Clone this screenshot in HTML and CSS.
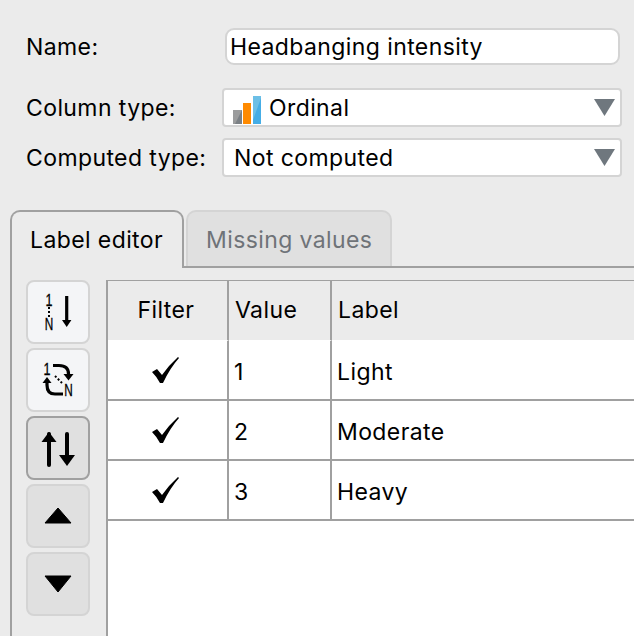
FILE: index.html
```html
<!DOCTYPE html>
<html lang="en">
<head>
    <meta charset="UTF-8">
    <meta name="viewport" content="width=device-width, initial-scale=1.0">
    <title>Column settings</title>
    <link rel="stylesheet" href="styles.css">
</head>
<body>
    <form class="settings">
        <div class="field field-name">
            <label for="name">Name:</label>
            <input type="text" id="name" value="Headbanging intensity">
        </div>
        <div class="field field-type">
            <label>Column type:</label>
            <div class="select">
                <svg class="ordinal-icon" width="28" height="28" viewBox="0 0 28 28">
                    <rect x="0" y="14" width="9" height="14" fill="#9b9c9d"/>
                    <path d="M9 14V28H2Z" fill="#7b8085"/>
                    <rect x="10" y="7" width="8" height="21" fill="#ff8a00"/>
                    <rect x="20" y="0" width="8" height="28" fill="#45ade6"/>
                    <path d="M20 0H28V2L20 24Z" fill="#6cbfe6"/>
                </svg>
                <span>Ordinal</span>
                <svg class="caret" width="21" height="17" viewBox="0 0 21 17"><path d="M0 0H21L10.500 17Z"/></svg>
            </div>
        </div>
        <div class="field field-computed">
            <label>Computed type:</label>
            <div class="select select-plain">
                <span>Not computed</span>
                <svg class="caret" width="21" height="17" viewBox="0 0 21 17"><path d="M0 0H21L10.500 17Z"/></svg>
            </div>
        </div>
    </form>

    <div class="tabs">
        <div class="tab tab-active">Label editor</div>
        <div class="tabs-rest">
            <div class="tab">Missing values</div>
        </div>
    </div>

    <div class="panel">
        <div class="tools">
            <button type="button" class="tool">
                <svg width="60" height="60" viewBox="0 0 60 60">
                    <text class="num" x="21" y="24" textLength="7" lengthAdjust="spacingAndGlyphs">1</text>
                    <path class="dots" d="M21 25V35"/>
                    <text class="num" x="21" y="48" textLength="8.500" lengthAdjust="spacingAndGlyphs">N</text>
                    <path class="line" d="M38.700 14V40"/>
                    <path d="M34 38H43.400L38.700 45Z"/>
                </svg>
            </button>
            <button type="button" class="tool">
                <svg width="60" height="60" viewBox="0 0 60 60">
                    <text class="num" x="19" y="25" textLength="7" lengthAdjust="spacingAndGlyphs">1</text>
                    <text class="num" x="40.500" y="46" textLength="8.500" lengthAdjust="spacingAndGlyphs">N</text>
                    <path class="dots" d="M27 26L34 33"/>
                    <path class="line" d="M25 15.500H31Q40.500 15.500 40.500 24"/>
                    <path d="M35.500 24H45.500L40.500 30.500Z"/>
                    <path class="line" d="M19 33V35Q19 44 27 44H35"/>
                    <path d="M14.500 33H23.500L19 27Z"/>
                </svg>
            </button>
            <button type="button" class="tool tool-on">
                <svg width="60" height="60" viewBox="0 0 60 60">
                    <path class="line line-bold" d="M21 16V47"/>
                    <path d="M13.500 24L21 14L28.500 24Z"/>
                    <path class="line line-bold" d="M39 16V42"/>
                    <path d="M31 37H47L39 48Z"/>
                </svg>
            </button>
            <button type="button" class="tool tool-off">
                <svg width="60" height="60" viewBox="0 0 60 60"><path d="M17 37L30 22L43 37Z" stroke="#000" stroke-linejoin="round"/></svg>
            </button>
            <button type="button" class="tool tool-off">
                <svg width="60" height="60" viewBox="0 0 60 60"><path d="M17 22H43L30 38Z" stroke="#000" stroke-linejoin="round"/></svg>
            </button>
        </div>

        <div class="table-wrap">
            <table class="labels">
                <thead>
                    <tr>
                        <th class="col-filter">Filter</th>
                        <th class="col-value">Value</th>
                        <th class="col-label">Label</th>
                    </tr>
                </thead>
                <tbody>
                    <tr>
                        <td class="col-filter"><svg class="check" width="28" height="27" viewBox="0 0 28 27"><path d="M0 15L5 12L10 18Q17 8 26 0L27 1Q18 11 11 26L8 26Q5 20 0 15Z"/></svg></td>
                        <td>1</td>
                        <td>Light</td>
                    </tr>
                    <tr>
                        <td class="col-filter"><svg class="check" width="28" height="27" viewBox="0 0 28 27"><path d="M0 15L5 12L10 18Q17 8 26 0L27 1Q18 11 11 26L8 26Q5 20 0 15Z"/></svg></td>
                        <td>2</td>
                        <td>Moderate</td>
                    </tr>
                    <tr>
                        <td class="col-filter"><svg class="check" width="28" height="27" viewBox="0 0 28 27"><path d="M0 15L5 12L10 18Q17 8 26 0L27 1Q18 11 11 26L8 26Q5 20 0 15Z"/></svg></td>
                        <td>3</td>
                        <td>Heavy</td>
                    </tr>
                </tbody>
            </table>
        </div>
    </div>
</body>
</html>
```

FILE: styles.css
```css
body {
    font-family: Inter, "Liberation Sans", sans-serif;
    font-size: 23px;
    letter-spacing: 0.4px;
    margin: 0;
    height: 636px;
    overflow: hidden;
    display: flex;
    flex-direction: column;
    background-color: #ebebeb;
    color: #000;
}
.settings {
    padding: 28px 12px 33px 26px;
    display: flex;
    flex-direction: column;
}
.field {
    display: flex;
    align-items: center;
}
.field label {
    width: 196px;
    flex-shrink: 0;
}
.field-name label {
    width: 199px;
}
.field-name {
    margin-bottom: 23px;
}
.field-type {
    margin-bottom: 11px;
}
input {
    flex: 1;
    height: 37px;
    box-sizing: border-box;
    margin-right: 2px;
    padding: 0 3px;
    font: inherit;
    letter-spacing: inherit;
    color: #000;
    background-color: #fff;
    border: 2px solid #d4d4d4;
    border-radius: 9px;
    outline: none;
}
.select {
    flex: 1;
    height: 39px;
    box-sizing: border-box;
    display: flex;
    align-items: center;
    gap: 8px;
    padding: 0 5px 0 9px;
    background-color: #fff;
    border: 2px solid #d4d4d4;
    border-radius: 4px;
}
.select-plain {
    padding-left: 10px;
}
.ordinal-icon {
    margin-top: 5px;
    flex-shrink: 0;
}
.caret {
    margin-left: auto;
    fill: #6f777e;
}
.tabs {
    display: flex;
    padding-left: 10px;
}
.tabs-rest {
    flex: 1;
    padding-left: 2px;
    border-bottom: 2px solid #a0a0a0;
}
.tab {
    width: 206px;
    height: 56px;
    box-sizing: border-box;
    padding-left: 18px;
    line-height: 56px;
    color: #6f7378;
    background-color: #e0e0e0;
    border: 2px solid #d4d4d4;
    border-bottom: none;
    border-radius: 10px 10px 0 0;
}
.tab-active {
    width: 174px;
    height: 58px;
    color: #000;
    background-color: #ebebeb;
    border-color: #a0a0a0;
}
.panel {
    flex: 1;
    display: flex;
    gap: 16px;
    margin-left: 10px;
    padding: 12px 0 0 14px;
    border-left: 2px solid #a0a0a0;
    min-height: 0;
}
.tools {
    display: flex;
    flex-direction: column;
    gap: 4px;
}
.tool {
    width: 64px;
    height: 64px;
    box-sizing: border-box;
    padding: 0;
    background-color: #f4f5f7;
    border: 2px solid #d4d4d4;
    border-radius: 8px;
}
.tool svg {
    display: block;
}
.tool-on {
    background-color: #e0e0e0;
    border-color: #a0a0a0;
}
.tool-off {
    background-color: #e0e0e0;
}
.num {
    font-family: "Liberation Sans", sans-serif;
    font-size: 16.5px;
    letter-spacing: 0;
    text-anchor: middle;
    stroke: #000;
    stroke-width: 0.3;
}
.dots {
    fill: none;
    stroke: #000;
    stroke-width: 2;
    stroke-dasharray: 2 2;
}
.line {
    fill: none;
    stroke: #000;
    stroke-width: 3.2;
}
.line-bold {
    stroke-width: 4;
    stroke-linecap: round;
}
.table-wrap {
    flex: 1;
    min-width: 0;
    overflow: hidden;
    background-color: #fff;
    border-left: 2px solid #a0a0a0;
    border-top: 1px solid #a0a0a0;
}
.labels {
    table-layout: fixed;
    width: 560px;
    border-collapse: separate;
    border-spacing: 0;
}
.labels th {
    height: 57px;
    padding: 0 0 2px 6px;
    font-weight: normal;
    text-align: left;
    background-color: #ebebeb;
    border-right: 2px solid #a0a0a0;
    border-bottom: 1px solid #fff;
}
.labels td {
    height: 54px;
    padding: 4px 0 0 5px;
    border-right: 2px solid #a0a0a0;
    border-bottom: 2px solid #a0a0a0;
}
.labels .col-filter {
    width: 116px;
    height: 58px;
    padding: 0 3px 0 0;
    text-align: center;
}
.labels th.col-filter {
    height: 57px;
    padding-bottom: 2px;
}
.col-value {
    width: 95px;
}
.check {
    display: block;
    margin: 0 auto;
}
```
